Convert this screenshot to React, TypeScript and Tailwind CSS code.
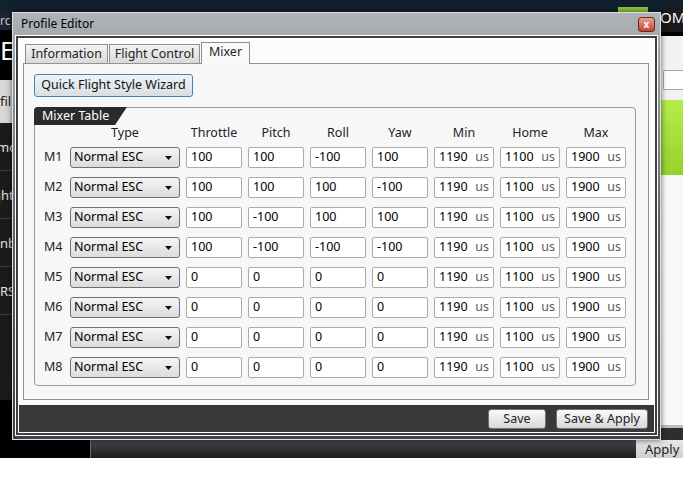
import React from "react";

const rows: [string, string, string, string][] = [
  ["100", "100", "-100", "100"],
  ["100", "100", "100", "-100"],
  ["100", "-100", "100", "100"],
  ["100", "-100", "-100", "-100"],
  ["0", "0", "0", "0"],
  ["0", "0", "0", "0"],
  ["0", "0", "0", "0"],
  ["0", "0", "0", "0"],
];

function Field({ v }: { v: string }) {
  return (
    <div className="w-[56px] h-[21px] bg-white border border-[#ababab] rounded-[2px] flex items-center pl-[4px] text-[12.5px] text-black leading-none">
      {v}
    </div>
  );
}

function UsField({ v }: { v: string }) {
  return (
    <div className="w-[60px] h-[21px] bg-white border border-[#ababab] rounded-[2px] flex items-center justify-between pl-[4px] pr-[4px] text-[12.5px] text-black leading-none">
      <span>{v}</span>
      <span className="text-[#5a5a5a]">us</span>
    </div>
  );
}

function Select() {
  return (
    <div className="w-[110px] h-[21px] bg-gradient-to-b from-[#f4f4f4] to-[#dcdcdc] border border-[#707070] rounded-[3px] flex items-center justify-between pl-[3px] pr-[7px] text-[12.5px] text-black leading-none">
      <span>Normal ESC</span>
      <svg width="7" height="4" viewBox="0 0 7 4">
        <path d="M0 0H7L3.5 4Z" fill="#111" />
      </svg>
    </div>
  );
}

export default function App() {
  return (
    <div className="relative w-[683px] h-[486px] bg-white overflow-hidden font-['Noto_Sans',sans-serif]">
      {/* background application */}
      <div className="h-[440px] flex">
        {/* left strip */}
        <div className="w-[12px] flex flex-col bg-[#1c1c1c] overflow-hidden">
          <div className="h-[12px] bg-[#13202e]" />
          <div className="h-[18px] bg-[#1e2530] text-[12px] text-[#c8c8c8] leading-[18px] whitespace-nowrap">rc</div>
          <div className="h-[50px] bg-black text-[26px] text-white leading-[40px] whitespace-nowrap">E</div>
          <div className="h-[43px] bg-[#d8d8d8] text-[13px] text-[#222] leading-[43px] whitespace-nowrap">fil</div>
          <div className="h-[48px] border-b border-[#3c3c3c] text-[13px] text-[#e0e0e0] leading-[48px] whitespace-nowrap ml-[-3px]">mc</div>
          <div className="h-[48px] border-b border-[#3c3c3c] text-[13px] text-[#e0e0e0] leading-[48px] whitespace-nowrap ml-[-7px]">ght</div>
          <div className="h-[48px] border-b border-[#3c3c3c] text-[13px] text-[#e0e0e0] leading-[48px] whitespace-nowrap">nb</div>
          <div className="h-[48px] border-b border-[#3c3c3c] text-[13px] text-[#e0e0e0] leading-[48px] whitespace-nowrap">RS</div>
          <div className="flex-1 bg-[#1c1c1c]" />
          <div className="h-[40px] bg-black" />
        </div>
        {/* middle */}
        <div className="flex-1 flex flex-col">
          <div className="h-[12px] bg-[#13202e] flex justify-end pr-[12px]">
            <div className="w-[30px] h-[5px] mt-[7px] bg-[#8cc63f]" />
          </div>
          <div className="flex-1 bg-[#222]" />
        </div>
        {/* right strip */}
        <div className="w-[23px] flex flex-col">
          <div className="h-[7px] bg-[#13202e]" />
          <div className="h-[25px] bg-[#1a1a1a] text-[15px] text-white leading-[20px] whitespace-nowrap overflow-hidden">OM</div>
          <div className="h-[4px] bg-black" />
          <div className="h-[64px] bg-[#f2f2f2] pt-[34px] pl-[3px]">
            <div className="h-[20px] border border-[#a8a8a8] border-r-0 rounded-l-[2px] bg-white" />
          </div>
          <div className="h-[75px] bg-gradient-to-b from-[#b6ec4a] to-[#93d22c]" />
          <div className="flex-1 bg-[#f8f8f8]" />
          <div className="h-[3px] bg-[#bdbdbd]" />
          <div className="h-[12px] bg-[#2e2e2e]" />
        </div>
      </div>
      <div className="h-[18px] flex">
        <div className="w-[90px] bg-black" />
        <div className="flex-1 border-l border-[#6a6a6a] bg-gradient-to-b from-[#484848] to-[#1e1e1e]" />
        <div className="w-[47px] bg-gradient-to-b from-[#e6e6e6] to-[#cfcfcf] text-[13px] text-[#222] leading-[18px] pl-[9px] whitespace-nowrap">Apply</div>
      </div>

      {/* dialog window */}
      <div className="absolute left-[12px] top-[12px] w-[649px] h-[428px] border border-[#d9dfe5] bg-gradient-to-b from-[#aeb3b8] via-[#5c6167] to-[#3d4248] flex flex-col px-[2px] pb-[3px] shadow-[0_0_6px_rgba(0,0,0,0.6)]">
        <div className="h-[22px] flex items-center justify-between pl-[6px] pr-[3px]">
          <span className="text-[12px] text-black leading-none">Profile Editor</span>
          <div className="w-[17px] h-[15px] rounded-[3px] border border-[#6e2a1c] bg-gradient-to-b from-[#e7a190] to-[#c0432a] flex items-center justify-center text-white text-[10px] font-bold leading-none">
            x
          </div>
        </div>
        <div className="flex-1 border border-white bg-[#3b4045] p-[2px] flex">
          <div className="flex-1 border border-white flex flex-col bg-[#fcfcfc]">
            {/* tabs */}
            <div className="h-[24px] flex items-end pl-[6px] text-[12.5px] text-[#222]">
              <div className="w-[83px] h-[19px] border border-b-0 border-[#8e8e8e] bg-gradient-to-b from-[#f3f3f3] to-[#d9d9d9] flex items-center justify-center leading-none">
                Information
              </div>
              <div className="w-[91px] h-[19px] ml-px border border-b-0 border-[#8e8e8e] bg-gradient-to-b from-[#f3f3f3] to-[#d9d9d9] flex items-center justify-center leading-none">
                Flight Control
              </div>
              <div className="w-[49px] h-[22px] ml-px mb-[-1px] relative z-10 border border-b-0 border-[#8e8e8e] bg-[#fafafa] flex items-start pt-[2px] justify-center leading-[14px]">
                Mixer
              </div>
            </div>
            {/* pane */}
            <div className="h-[337px] ml-[4px] mr-[5px] border border-[#929292] bg-[#f7f7f7] pl-[10px] pt-[10px] flex flex-col">
              <div className="w-[159px] h-[23px] rounded-[3px] border border-[#3d86b0] bg-gradient-to-b from-[#eef3f6] to-[#d8dfe3] flex items-center justify-center text-[12.5px] text-[#111] leading-none">
                Quick Flight Style Wizard
              </div>
              <div className="mt-[10px] w-[602px] h-[279px] border border-[#9a9a9a] rounded-[4px] flex flex-col">
                <div className="ml-[-1px] mt-[-1px] w-[93px] h-[18px] bg-[#2b2b2b] rounded-tl-[4px] [clip-path:polygon(0_0,100%_0,calc(100%-12px)_100%,0_100%)] text-white text-[12.5px] leading-[18px] pl-[8px]">
                  Mixer Table
                </div>
                <div className="h-[16px] flex gap-[6px] pl-[35px] text-[12.5px] text-[#222] leading-[16px]">
                  <div className="w-[110px] text-center">Type</div>
                  <div className="w-[56px] text-center">Throttle</div>
                  <div className="w-[56px] text-center">Pitch</div>
                  <div className="w-[56px] text-center">Roll</div>
                  <div className="w-[56px] text-center">Yaw</div>
                  <div className="w-[60px] text-center">Min</div>
                  <div className="w-[60px] text-center">Home</div>
                  <div className="w-[60px] text-center">Max</div>
                </div>
                <div className="mt-[6px] flex flex-col gap-[9px] pl-[9px]">
                  {rows.map((r, i) => (
                    <div key={i} className="h-[21px] flex items-center">
                      <div className="w-[26px] text-[12.5px] text-[#222] leading-none">M{i + 1}</div>
                      <Select />
                      <div className="flex gap-[6px] ml-[6px]">
                        <Field v={r[0]} />
                        <Field v={r[1]} />
                        <Field v={r[2]} />
                        <Field v={r[3]} />
                        <UsField v="1190" />
                        <UsField v="1100" />
                        <UsField v="1900" />
                      </div>
                    </div>
                  ))}
                </div>
              </div>
            </div>
            <div className="h-[5px]" />
            {/* footer */}
            <div className="flex-1 bg-[#383838] flex items-start justify-end gap-[10px] pr-[6px] pt-[4px]">
              <div className="w-[58px] h-[20px] rounded-[3px] border border-[#6f6f6f] bg-gradient-to-b from-[#fafafa] to-[#d8d8d8] flex items-center justify-center text-[12.5px] text-[#222] leading-none">
                Save
              </div>
              <div className="w-[92px] h-[20px] rounded-[3px] border border-[#6f6f6f] bg-gradient-to-b from-[#fafafa] to-[#d8d8d8] flex items-center justify-center text-[12.5px] text-[#222] leading-none">
                Save &amp; Apply
              </div>
            </div>
          </div>
        </div>
      </div>
    </div>
  );
}
